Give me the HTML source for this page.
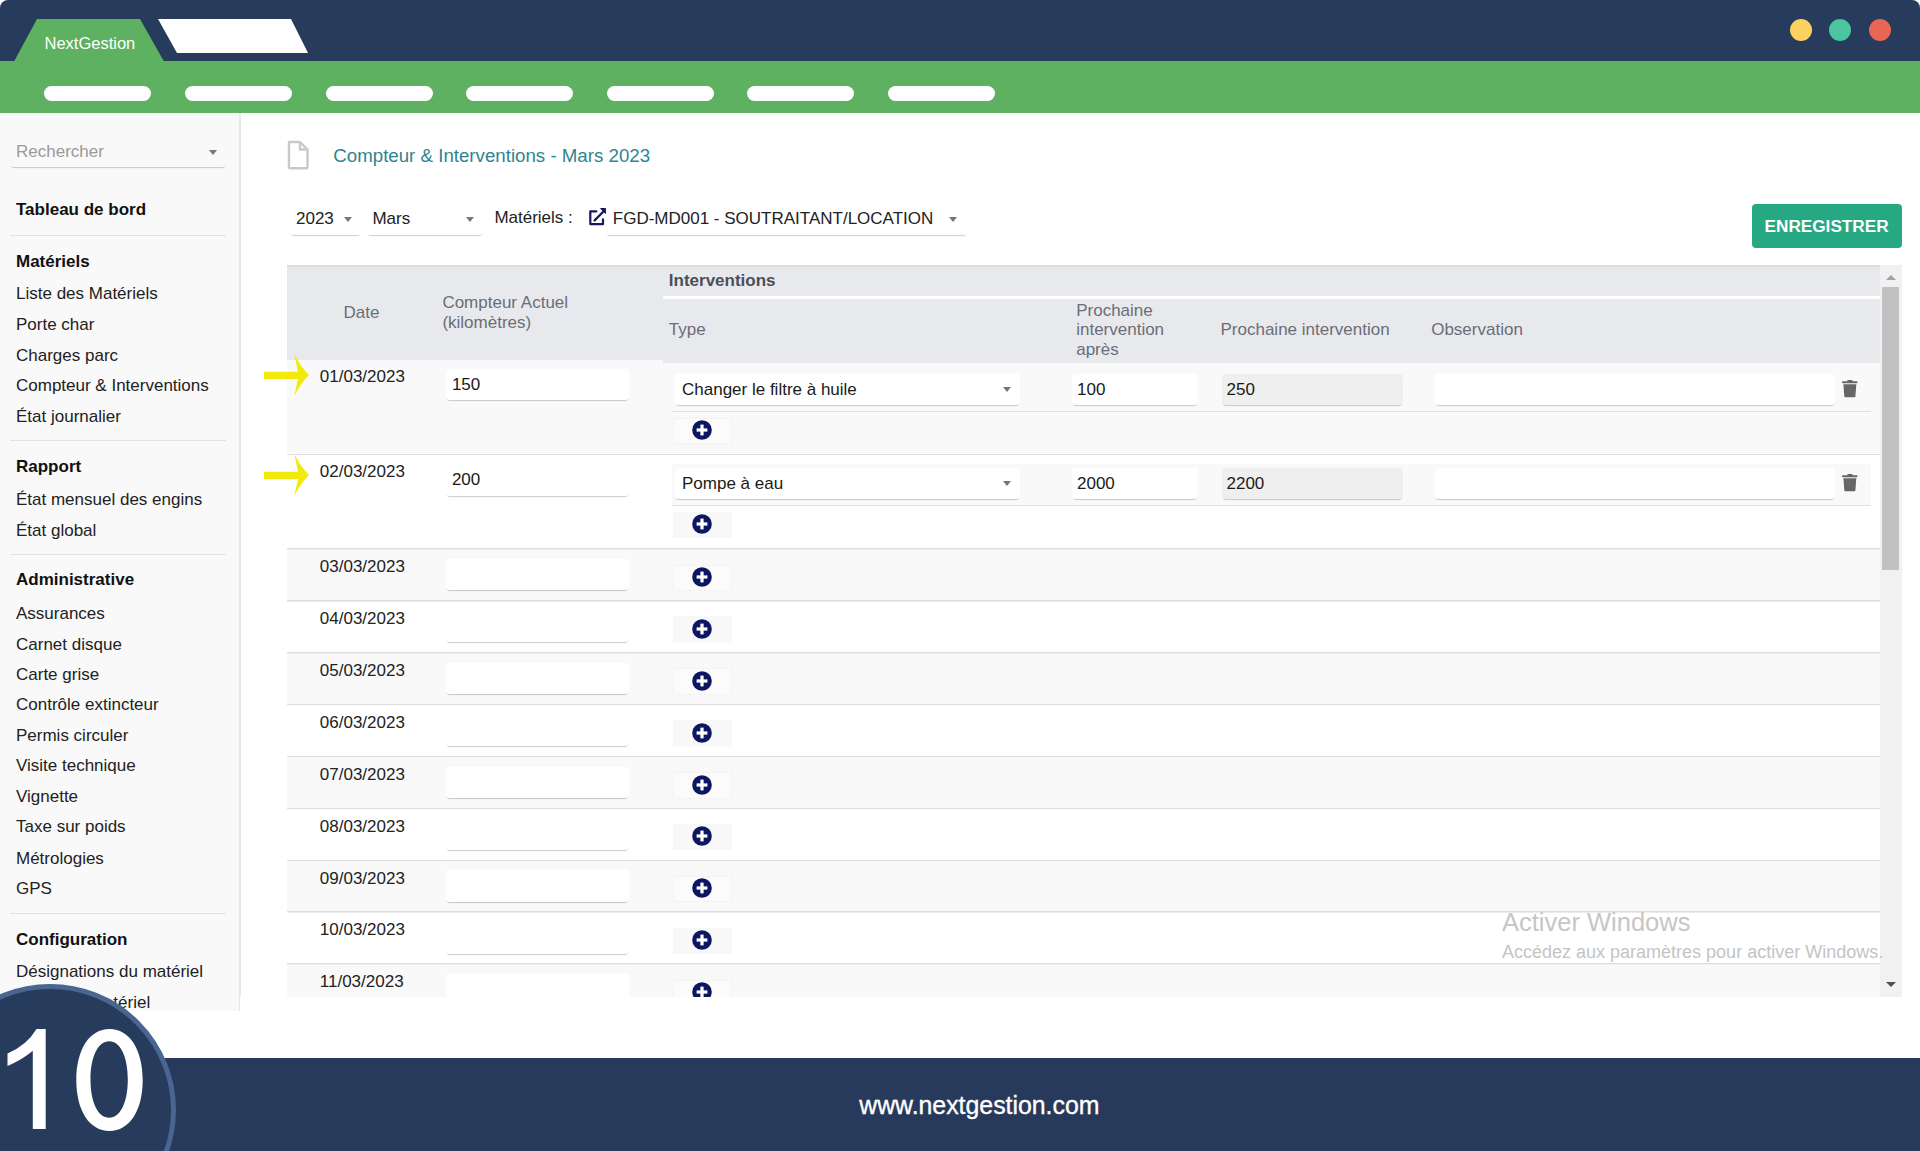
<!DOCTYPE html>
<html><head><meta charset="utf-8">
<style>
*{box-sizing:border-box;margin:0;padding:0}
html,body{width:1920px;height:1151px;overflow:hidden;background:#fff;font-family:"Liberation Sans",sans-serif;color:#222}
.a{position:absolute}
.t{position:absolute;white-space:nowrap;font-size:17px;line-height:20px}
#top{left:0;top:0;width:1920px;height:61px;background:#273b5c;border-radius:8px 8px 0 0}
#green{left:0;top:61px;width:1920px;height:52px;background:#5eb160}
.pill{position:absolute;top:86px;width:107px;height:15px;border-radius:8px;background:#fff}
.dot{position:absolute;top:18.8px;width:22.4px;height:22.4px;border-radius:50%}
#side{left:0;top:113px;width:241px;height:898px;background:#f9f9f9;border-right:2px solid #e8e8e8;overflow:hidden}
.sep{position:absolute;left:10px;width:216px;height:1px;background:#e2e2e2}
#footer{left:0;top:1058px;width:1920px;height:93px;background:#273a5b}
.sel{position:absolute;background:#fff;border-radius:4px;box-shadow:0 2px 1px -1px rgba(0,0,0,0.2)}
.arr{position:absolute;width:0;height:0;border-left:4.5px solid transparent;border-right:4.5px solid transparent;border-top:5.5px solid #777}
</style></head><body>
<div id="top" class="a"></div>
<svg class="a" style="left:0;top:0" width="340" height="62">
<polygon points="14,61.5 37,19 140,19 164,61.5" fill="#5eb160"/>
<polygon points="158,19 291,19 308,53 177,53" fill="#fff"/>
</svg>
<div class="t" style="left:44.5px;top:32.8px;font-size:16.5px;line-height:20px;color:#fff">NextGestion</div>
<div class="dot" style="left:1789.8px;background:#fdd15f"></div>
<div class="dot" style="left:1828.8px;background:#4cc5a0"></div>
<div class="dot" style="left:1868.8px;background:#e86654"></div>
<div id="green" class="a"></div>
<div class="pill" style="left:44px"></div>
<div class="pill" style="left:185px"></div>
<div class="pill" style="left:326px"></div>
<div class="pill" style="left:466px"></div>
<div class="pill" style="left:607px"></div>
<div class="pill" style="left:747px"></div>
<div class="pill" style="left:888px"></div>
<div id="side" class="a">
<div class="sel" style="left:10px;top:22px;width:216px;height:32px;background:#f9f9f9"></div>
<div class="arr" style="left:208.5px;top:36.5px"></div>
<div class="t" style="left:16.0px;top:29.2px;font-size:17px;line-height:20px;color:#9a9a9a">Rechercher</div>
<div class="t" style="left:16.0px;top:86.7px;font-size:17px;line-height:20px;font-weight:bold;color:#111">Tableau de bord</div>
<div class="sep" style="top:121.6px"></div>
<div class="t" style="left:16.0px;top:138.6px;font-size:17px;line-height:20px;font-weight:bold;color:#111">Matériels</div>
<div class="t" style="left:16.0px;top:171.1px;font-size:17px;line-height:20px;color:#222">Liste des Matériels</div>
<div class="t" style="left:16.0px;top:202.2px;font-size:17px;line-height:20px;color:#222">Porte char</div>
<div class="t" style="left:16.0px;top:232.6px;font-size:17px;line-height:20px;color:#222">Charges parc</div>
<div class="t" style="left:16.0px;top:263.0px;font-size:17px;line-height:20px;color:#222">Compteur &amp; Interventions</div>
<div class="t" style="left:16.0px;top:293.9px;font-size:17px;line-height:20px;color:#222">État journalier</div>
<div class="sep" style="top:327.3px"></div>
<div class="t" style="left:16.0px;top:344.0px;font-size:17px;line-height:20px;font-weight:bold;color:#111">Rapport</div>
<div class="t" style="left:16.0px;top:377.2px;font-size:17px;line-height:20px;color:#222">État mensuel des engins</div>
<div class="t" style="left:16.0px;top:407.6px;font-size:17px;line-height:20px;color:#222">État global</div>
<div class="sep" style="top:440.9px"></div>
<div class="t" style="left:16.0px;top:457.4px;font-size:17px;line-height:20px;font-weight:bold;color:#111">Administrative</div>
<div class="t" style="left:16.0px;top:491.3px;font-size:17px;line-height:20px;color:#222">Assurances</div>
<div class="t" style="left:16.0px;top:521.7px;font-size:17px;line-height:20px;color:#222">Carnet disque</div>
<div class="t" style="left:16.0px;top:551.8px;font-size:17px;line-height:20px;color:#222">Carte grise</div>
<div class="t" style="left:16.0px;top:582.3px;font-size:17px;line-height:20px;color:#222">Contrôle extincteur</div>
<div class="t" style="left:16.0px;top:612.8px;font-size:17px;line-height:20px;color:#222">Permis circuler</div>
<div class="t" style="left:16.0px;top:643.2px;font-size:17px;line-height:20px;color:#222">Visite technique</div>
<div class="t" style="left:16.0px;top:673.9px;font-size:17px;line-height:20px;color:#222">Vignette</div>
<div class="t" style="left:16.0px;top:704.3px;font-size:17px;line-height:20px;color:#222">Taxe sur poids</div>
<div class="t" style="left:16.0px;top:735.8px;font-size:17px;line-height:20px;color:#222">Métrologies</div>
<div class="t" style="left:16.0px;top:766.2px;font-size:17px;line-height:20px;color:#222">GPS</div>
<div class="sep" style="top:799.8px"></div>
<div class="t" style="left:16.0px;top:816.6px;font-size:17px;line-height:20px;font-weight:bold;color:#111">Configuration</div>
<div class="t" style="left:16.0px;top:848.7px;font-size:17px;line-height:20px;color:#222">Désignations du matériel</div>
<div class="t" style="left:16.0px;top:879.5px;font-size:17px;line-height:20px;color:#222">Types de matériel</div>
</div>
<svg class="a" style="left:286px;top:139px" width="26" height="33" viewBox="0 0 26 33">
<path d="M3,3 H14 L21.5,10.5 V28 Q21.5,29.3 20,29.3 H4.5 Q3,29.3 3,28 Z" fill="none" stroke="#c9c9c9" stroke-width="2.4" stroke-linejoin="round"/>
<path d="M14,3 V10.5 H21.5" fill="none" stroke="#c9c9c9" stroke-width="2.4"/>
</svg>
<div class="t" style="left:333.3px;top:145.0px;font-size:18.7px;line-height:22px;color:#2e8590">Compteur &amp; Interventions - Mars 2023</div>
<div class="sel" style="left:289.7px;top:203.0px;width:71.1px;height:32.0px;"></div>
<div class="t" style="left:296.0px;top:209.3px;font-size:17px;line-height:20px;color:#222">2023</div>
<div class="arr" style="left:344.2px;top:217px"></div>
<div class="sel" style="left:366.5px;top:203.0px;width:116.3px;height:32.0px;"></div>
<div class="t" style="left:372.4px;top:209.3px;font-size:17px;line-height:20px;color:#222">Mars</div>
<div class="arr" style="left:465.6px;top:217px"></div>
<div class="t" style="left:494.4px;top:208.3px;font-size:17px;line-height:20px;color:#222">Matériels :</div>
<svg class="a" style="left:588px;top:207px" width="20" height="20" viewBox="0 0 20 20">
<path d="M8.3,4.3 H2.3 V17.1 H15 V12.3" fill="none" stroke="#17175c" stroke-width="2.2" stroke-linecap="round" stroke-linejoin="round"/>
<path d="M6.6,13.4 L15.2,4.8" fill="none" stroke="#17175c" stroke-width="2.2" stroke-linecap="round"/>
<polygon points="12.6,1.5 17.6,1.5 17.6,6.5" fill="#17175c" stroke="#17175c" stroke-width="1" stroke-linejoin="round"/>
</svg>
<div class="sel" style="left:606.0px;top:203.0px;width:360.5px;height:31.8px;"></div>
<div class="t" style="left:612.8px;top:209.2px;font-size:17px;line-height:20px;color:#222">FGD-MD001 - SOUTRAITANT/LOCATION</div>
<div class="arr" style="left:948.8px;top:216.7px"></div>
<div class="a" style="left:1752.0px;top:204.0px;width:149.7px;height:43.6px;background:#26a882;border-radius:4px"></div>
<div class="t" style="left:1764.5px;top:216.1px;font-size:17.2px;line-height:20px;color:#fff;font-weight:bold">ENREGISTRER</div>
<div class="a" style="left:286.5px;top:265.0px;width:1593.5px;height:94.6px;background:#e8e9ed"></div>
<div class="a" style="left:286.5px;top:265.0px;width:1593.5px;height:2.0px;background:#dcdde1"></div>
<div class="a" style="left:663.0px;top:296.0px;width:1217.0px;height:3.3px;background:#fff"></div>
<div class="t" style="left:343.6px;top:303.2px;font-size:17px;line-height:20px;color:#6b6e77">Date</div>
<div class="t" style="left:442.4px;top:292.8px;font-size:17px;line-height:20px;color:#6b6e77">Compteur Actuel</div>
<div class="t" style="left:442.4px;top:312.9px;font-size:17px;line-height:20px;color:#6b6e77">(kilomètres)</div>
<div class="t" style="left:668.8px;top:271.4px;font-size:17px;line-height:20px;color:#4b4f58;font-weight:bold">Interventions</div>
<div class="t" style="left:668.8px;top:320.4px;font-size:17px;line-height:20px;color:#6b6e77">Type</div>
<div class="t" style="left:1076.2px;top:300.9px;font-size:17px;line-height:20px;color:#6b6e77">Prochaine</div>
<div class="t" style="left:1076.2px;top:320.3px;font-size:17px;line-height:20px;color:#6b6e77">intervention</div>
<div class="t" style="left:1076.2px;top:339.9px;font-size:17px;line-height:20px;color:#6b6e77">après</div>
<div class="t" style="left:1220.5px;top:320.3px;font-size:17px;line-height:20px;color:#6b6e77">Prochaine intervention</div>
<div class="t" style="left:1431.2px;top:320.3px;font-size:17px;line-height:20px;color:#6b6e77">Observation</div>
<div class="a" style="left:286.5px;top:359.6px;width:1593.5px;height:93.9px;background:#f9f9f9"></div>
<div class="a" style="left:663.0px;top:359.0px;width:1217.0px;height:3.8px;background:#e8e9ed"></div>
<div class="a" style="left:286.5px;top:453.5px;width:1593.5px;height:2.0px;background:linear-gradient(#dedede 50%,#ececec 50%)"></div>
<div class="t" style="left:319.8px;top:367.0px;font-size:17px;line-height:20px;color:#222">01/03/2023</div>
<div class="sel inp" style="left:446.1px;top:368.9px;width:182.8px;height:31.4px;"></div>
<div class="t" style="left:451.9px;top:375.0px;font-size:17px;line-height:20px;color:#1a1a1a">150</div>
<div class="a" style="left:671.8px;top:410.8px;width:1198.9px;height:1.5px;background:#e0e0e0"></div>
<div class="sel inp" style="left:675.3px;top:374.0px;width:345.2px;height:30.7px;"></div>
<div class="t" style="left:682.0px;top:379.8px;font-size:17px;line-height:20px;color:#1a1a1a">Changer le filtre à huile</div>
<div class="arr" style="left:1003.3px;top:387.0px"></div>
<div class="sel inp" style="left:1072.0px;top:374.0px;width:125.9px;height:31.0px;"></div>
<div class="t" style="left:1077.0px;top:379.8px;font-size:17px;line-height:20px;color:#1a1a1a">100</div>
<div class="sel inp" style="left:1221.5px;top:374.0px;width:181.5px;height:31.0px;background:#efefef"></div>
<div class="t" style="left:1226.5px;top:379.8px;font-size:17px;line-height:20px;color:#1a1a1a">250</div>
<div class="sel inp" style="left:1435.0px;top:374.0px;width:399.9px;height:31.0px;"></div>
<svg class="a" style="left:1841.5px;top:379.8px" width="16" height="18" viewBox="0 0 16 18">
<rect x="0" y="1.3" width="15.5" height="2" rx="0.8" fill="#666"/><rect x="5.3" y="0" width="5.3" height="2" rx="0.8" fill="#666"/>
<path d="M1.4,4.3 H14.3 L13.4,16.6 Q13.3,17.3 12.6,17.3 H3.1 Q2.4,17.3 2.3,16.6 Z" fill="#666"/></svg>
<div class="a" style="left:672.5px;top:417.8px;width:59.2px;height:26.6px;background:#fbfbfb;box-shadow:inset 0 0 0 1px #f3f3f3"></div>
<svg class="a" style="left:692.2px;top:420.3px" width="20" height="20" viewBox="0 0 20 20">
<circle cx="10" cy="10" r="9.8" fill="#0d1660"/><rect x="8.4" y="4.6" width="3.2" height="10.8" fill="#fff"/><rect x="4.6" y="8.4" width="10.8" height="3.2" fill="#fff"/></svg>
<div class="a" style="left:286.5px;top:455.0px;width:1593.5px;height:93.3px;background:#fff"></div>
<div class="a" style="left:286.5px;top:548.3px;width:1593.5px;height:2.0px;background:linear-gradient(#dedede 50%,#ececec 50%)"></div>
<div class="t" style="left:319.8px;top:462.4px;font-size:17px;line-height:20px;color:#222">02/03/2023</div>
<div class="sel inp" style="left:446.1px;top:464.3px;width:182.8px;height:31.4px;"></div>
<div class="t" style="left:451.9px;top:470.4px;font-size:17px;line-height:20px;color:#1a1a1a">200</div>
<div class="a" style="left:671.8px;top:463.7px;width:1198.9px;height:41.0px;background:#f9f9f9"></div>
<div class="a" style="left:671.8px;top:504.7px;width:1198.9px;height:1.5px;background:#e0e0e0"></div>
<div class="sel inp" style="left:675.3px;top:467.9px;width:345.2px;height:30.7px;"></div>
<div class="t" style="left:682.0px;top:473.7px;font-size:17px;line-height:20px;color:#1a1a1a">Pompe à eau</div>
<div class="arr" style="left:1003.3px;top:480.9px"></div>
<div class="sel inp" style="left:1072.0px;top:467.9px;width:125.9px;height:31.0px;"></div>
<div class="t" style="left:1077.0px;top:473.7px;font-size:17px;line-height:20px;color:#1a1a1a">2000</div>
<div class="sel inp" style="left:1221.5px;top:467.9px;width:181.5px;height:31.0px;background:#efefef"></div>
<div class="t" style="left:1226.5px;top:473.7px;font-size:17px;line-height:20px;color:#1a1a1a">2200</div>
<div class="sel inp" style="left:1435.0px;top:467.9px;width:399.9px;height:31.0px;"></div>
<svg class="a" style="left:1841.5px;top:473.7px" width="16" height="18" viewBox="0 0 16 18">
<rect x="0" y="1.3" width="15.5" height="2" rx="0.8" fill="#666"/><rect x="5.3" y="0" width="5.3" height="2" rx="0.8" fill="#666"/>
<path d="M1.4,4.3 H14.3 L13.4,16.6 Q13.3,17.3 12.6,17.3 H3.1 Q2.4,17.3 2.3,16.6 Z" fill="#666"/></svg>
<div class="a" style="left:672.5px;top:511.7px;width:59.2px;height:26.6px;background:#f8f8f8;"></div>
<svg class="a" style="left:692.2px;top:514.2px" width="20" height="20" viewBox="0 0 20 20">
<circle cx="10" cy="10" r="9.8" fill="#0d1660"/><rect x="8.4" y="4.6" width="3.2" height="10.8" fill="#fff"/><rect x="4.6" y="8.4" width="10.8" height="3.2" fill="#fff"/></svg>
<div class="a" style="left:286.5px;top:549.8px;width:1593.5px;height:50.4px;background:#f9f9f9"></div>
<div class="a" style="left:286.5px;top:600.2px;width:1593.5px;height:2.0px;background:linear-gradient(#dedede 50%,#ececec 50%)"></div>
<div class="t" style="left:319.8px;top:557.2px;font-size:17px;line-height:20px;color:#222">03/03/2023</div>
<div class="sel inp" style="left:446.1px;top:559.1px;width:182.8px;height:31.4px;"></div>
<div class="a" style="left:672.5px;top:564.5px;width:59.2px;height:26.6px;background:#fbfbfb;box-shadow:inset 0 0 0 1px #f3f3f3"></div>
<svg class="a" style="left:692.2px;top:567.0px" width="20" height="20" viewBox="0 0 20 20">
<circle cx="10" cy="10" r="9.8" fill="#0d1660"/><rect x="8.4" y="4.6" width="3.2" height="10.8" fill="#fff"/><rect x="4.6" y="8.4" width="10.8" height="3.2" fill="#fff"/></svg>
<div class="a" style="left:286.5px;top:601.7px;width:1593.5px;height:50.4px;background:#fff"></div>
<div class="a" style="left:286.5px;top:652.0px;width:1593.5px;height:2.0px;background:linear-gradient(#dedede 50%,#ececec 50%)"></div>
<div class="t" style="left:319.8px;top:609.1px;font-size:17px;line-height:20px;color:#222">04/03/2023</div>
<div class="sel inp" style="left:446.1px;top:611.0px;width:182.8px;height:31.4px;"></div>
<div class="a" style="left:672.5px;top:616.4px;width:59.2px;height:26.6px;background:#f8f8f8;"></div>
<svg class="a" style="left:692.2px;top:618.9px" width="20" height="20" viewBox="0 0 20 20">
<circle cx="10" cy="10" r="9.8" fill="#0d1660"/><rect x="8.4" y="4.6" width="3.2" height="10.8" fill="#fff"/><rect x="4.6" y="8.4" width="10.8" height="3.2" fill="#fff"/></svg>
<div class="a" style="left:286.5px;top:653.5px;width:1593.5px;height:50.4px;background:#f9f9f9"></div>
<div class="a" style="left:286.5px;top:703.9px;width:1593.5px;height:2.0px;background:linear-gradient(#dedede 50%,#ececec 50%)"></div>
<div class="t" style="left:319.8px;top:661.0px;font-size:17px;line-height:20px;color:#222">05/03/2023</div>
<div class="sel inp" style="left:446.1px;top:662.8px;width:182.8px;height:31.4px;"></div>
<div class="a" style="left:672.5px;top:668.2px;width:59.2px;height:26.6px;background:#fbfbfb;box-shadow:inset 0 0 0 1px #f3f3f3"></div>
<svg class="a" style="left:692.2px;top:670.8px" width="20" height="20" viewBox="0 0 20 20">
<circle cx="10" cy="10" r="9.8" fill="#0d1660"/><rect x="8.4" y="4.6" width="3.2" height="10.8" fill="#fff"/><rect x="4.6" y="8.4" width="10.8" height="3.2" fill="#fff"/></svg>
<div class="a" style="left:286.5px;top:705.4px;width:1593.5px;height:50.4px;background:#fff"></div>
<div class="a" style="left:286.5px;top:755.8px;width:1593.5px;height:2.0px;background:linear-gradient(#dedede 50%,#ececec 50%)"></div>
<div class="t" style="left:319.8px;top:712.8px;font-size:17px;line-height:20px;color:#222">06/03/2023</div>
<div class="sel inp" style="left:446.1px;top:714.7px;width:182.8px;height:31.4px;"></div>
<div class="a" style="left:672.5px;top:720.1px;width:59.2px;height:26.6px;background:#f8f8f8;"></div>
<svg class="a" style="left:692.2px;top:722.6px" width="20" height="20" viewBox="0 0 20 20">
<circle cx="10" cy="10" r="9.8" fill="#0d1660"/><rect x="8.4" y="4.6" width="3.2" height="10.8" fill="#fff"/><rect x="4.6" y="8.4" width="10.8" height="3.2" fill="#fff"/></svg>
<div class="a" style="left:286.5px;top:757.3px;width:1593.5px;height:50.4px;background:#f9f9f9"></div>
<div class="a" style="left:286.5px;top:807.7px;width:1593.5px;height:2.0px;background:linear-gradient(#dedede 50%,#ececec 50%)"></div>
<div class="t" style="left:319.8px;top:764.7px;font-size:17px;line-height:20px;color:#222">07/03/2023</div>
<div class="sel inp" style="left:446.1px;top:766.6px;width:182.8px;height:31.4px;"></div>
<div class="a" style="left:672.5px;top:772.0px;width:59.2px;height:26.6px;background:#fbfbfb;box-shadow:inset 0 0 0 1px #f3f3f3"></div>
<svg class="a" style="left:692.2px;top:774.5px" width="20" height="20" viewBox="0 0 20 20">
<circle cx="10" cy="10" r="9.8" fill="#0d1660"/><rect x="8.4" y="4.6" width="3.2" height="10.8" fill="#fff"/><rect x="4.6" y="8.4" width="10.8" height="3.2" fill="#fff"/></svg>
<div class="a" style="left:286.5px;top:809.2px;width:1593.5px;height:50.4px;background:#fff"></div>
<div class="a" style="left:286.5px;top:859.5px;width:1593.5px;height:2.0px;background:linear-gradient(#dedede 50%,#ececec 50%)"></div>
<div class="t" style="left:319.8px;top:816.6px;font-size:17px;line-height:20px;color:#222">08/03/2023</div>
<div class="sel inp" style="left:446.1px;top:818.5px;width:182.8px;height:31.4px;"></div>
<div class="a" style="left:672.5px;top:823.9px;width:59.2px;height:26.6px;background:#f8f8f8;"></div>
<svg class="a" style="left:692.2px;top:826.4px" width="20" height="20" viewBox="0 0 20 20">
<circle cx="10" cy="10" r="9.8" fill="#0d1660"/><rect x="8.4" y="4.6" width="3.2" height="10.8" fill="#fff"/><rect x="4.6" y="8.4" width="10.8" height="3.2" fill="#fff"/></svg>
<div class="a" style="left:286.5px;top:861.0px;width:1593.5px;height:50.4px;background:#f9f9f9"></div>
<div class="a" style="left:286.5px;top:911.4px;width:1593.5px;height:2.0px;background:linear-gradient(#dedede 50%,#ececec 50%)"></div>
<div class="t" style="left:319.8px;top:868.5px;font-size:17px;line-height:20px;color:#222">09/03/2023</div>
<div class="sel inp" style="left:446.1px;top:870.3px;width:182.8px;height:31.4px;"></div>
<div class="a" style="left:672.5px;top:875.8px;width:59.2px;height:26.6px;background:#fbfbfb;box-shadow:inset 0 0 0 1px #f3f3f3"></div>
<svg class="a" style="left:692.2px;top:878.2px" width="20" height="20" viewBox="0 0 20 20">
<circle cx="10" cy="10" r="9.8" fill="#0d1660"/><rect x="8.4" y="4.6" width="3.2" height="10.8" fill="#fff"/><rect x="4.6" y="8.4" width="10.8" height="3.2" fill="#fff"/></svg>
<div class="a" style="left:286.5px;top:912.9px;width:1593.5px;height:50.4px;background:#fff"></div>
<div class="a" style="left:286.5px;top:963.3px;width:1593.5px;height:2.0px;background:linear-gradient(#dedede 50%,#ececec 50%)"></div>
<div class="t" style="left:319.8px;top:920.3px;font-size:17px;line-height:20px;color:#222">10/03/2023</div>
<div class="sel inp" style="left:446.1px;top:922.2px;width:182.8px;height:31.4px;"></div>
<div class="a" style="left:672.5px;top:927.6px;width:59.2px;height:26.6px;background:#f8f8f8;"></div>
<svg class="a" style="left:692.2px;top:930.1px" width="20" height="20" viewBox="0 0 20 20">
<circle cx="10" cy="10" r="9.8" fill="#0d1660"/><rect x="8.4" y="4.6" width="3.2" height="10.8" fill="#fff"/><rect x="4.6" y="8.4" width="10.8" height="3.2" fill="#fff"/></svg>
<div class="a" style="left:286.5px;top:964.8px;width:1593.5px;height:35.2px;background:#f9f9f9"></div>
<div class="t" style="left:319.8px;top:972.2px;font-size:17px;line-height:20px;color:#222">11/03/2023</div>
<div class="sel inp" style="left:446.1px;top:974.1px;width:182.8px;height:31.4px;"></div>
<div class="a" style="left:672.5px;top:979.5px;width:59.2px;height:26.6px;background:#fbfbfb;box-shadow:inset 0 0 0 1px #f3f3f3"></div>
<svg class="a" style="left:692.2px;top:982.0px" width="20" height="20" viewBox="0 0 20 20">
<circle cx="10" cy="10" r="9.8" fill="#0d1660"/><rect x="8.4" y="4.6" width="3.2" height="10.8" fill="#fff"/><rect x="4.6" y="8.4" width="10.8" height="3.2" fill="#fff"/></svg>
<div class="a" style="left:1880.0px;top:265.0px;width:22.0px;height:732.2px;background:#f1f1f1"></div>
<div class="a" style="left:1882.0px;top:287.4px;width:17.0px;height:282.6px;background:#c1c1c1"></div>
<div class="a" style="left:1886px;top:274.5px;width:0;height:0;border-left:5px solid transparent;border-right:5px solid transparent;border-bottom:5px solid #a3a3a3"></div>
<div class="a" style="left:1886px;top:982px;width:0;height:0;border-left:5px solid transparent;border-right:5px solid transparent;border-top:5px solid #505050"></div>
<div class="a" style="left:240.0px;top:997.2px;width:1680.0px;height:60.8px;background:#fff"></div>
<div class="t" style="left:1502.0px;top:906.8px;font-size:25.5px;line-height:30px;color:#c6c6c6">Activer Windows</div>
<div class="t" style="left:1502.0px;top:941.0px;font-size:18px;line-height:22px;color:#c4c4c4">Accédez aux paramètres pour activer Windows.</div>
<svg class="a" style="left:262px;top:352.8px" width="50" height="44" viewBox="0 0 50 44">
<path d="M2,18.7 H36 Q34,10 32.4,1 Q38,13 47,22 Q38,31 32.4,43 Q34,34 36,25.9 H2 Z" fill="#f2ea0c"/></svg>
<svg class="a" style="left:262px;top:452.5px" width="50" height="44" viewBox="0 0 50 44">
<path d="M2,18.7 H36 Q34,10 32.4,1 Q38,13 47,22 Q38,31 32.4,43 Q34,34 36,25.9 H2 Z" fill="#f2ea0c"/></svg>
<div id="footer" class="a"></div>
<div class="t" style="left:859.2px;top:1091.7px;font-size:24.85px;line-height:28px;color:#fff;-webkit-text-stroke:0.35px #fff">www.nextgestion.com</div>
<div class="a" style="left:-76px;top:984px;width:252px;height:252px;border-radius:50%;background:#273b5c;border:5px solid #4a6590"></div>
<svg class="a" style="left:0;top:1020px" width="50" height="112" viewBox="0 0 50 112"><path d="M36.5,8.9 L45.7,8.9 L45.7,109 L32.8,109 L32.8,30.8 Q22,40 7.5,45.9 L7.5,33.4 Q27,25 36.5,8.9 Z" fill="#fff"/></svg>
<svg class="a" style="left:0;top:1020px" width="150" height="120" viewBox="0 0 150 120"><path fill-rule="evenodd" d="M109.5,8.9 C129.4,8.9 142.7,29.3 142.7,60.0 C142.7,90.6 129.4,111.0 109.5,111.0 C89.6,111.0 76.3,90.6 76.3,60.0 C76.3,29.3 89.6,8.9 109.5,8.9 Z M109.2,21.3 C120.3,21.3 127.8,36.6 127.8,59.5 C127.8,82.4 120.3,97.7 109.2,97.7 C98.0,97.7 90.5,82.4 90.5,59.5 C90.5,36.6 98.0,21.3 109.2,21.3 Z" fill="#fff"/></svg>
</body></html>
